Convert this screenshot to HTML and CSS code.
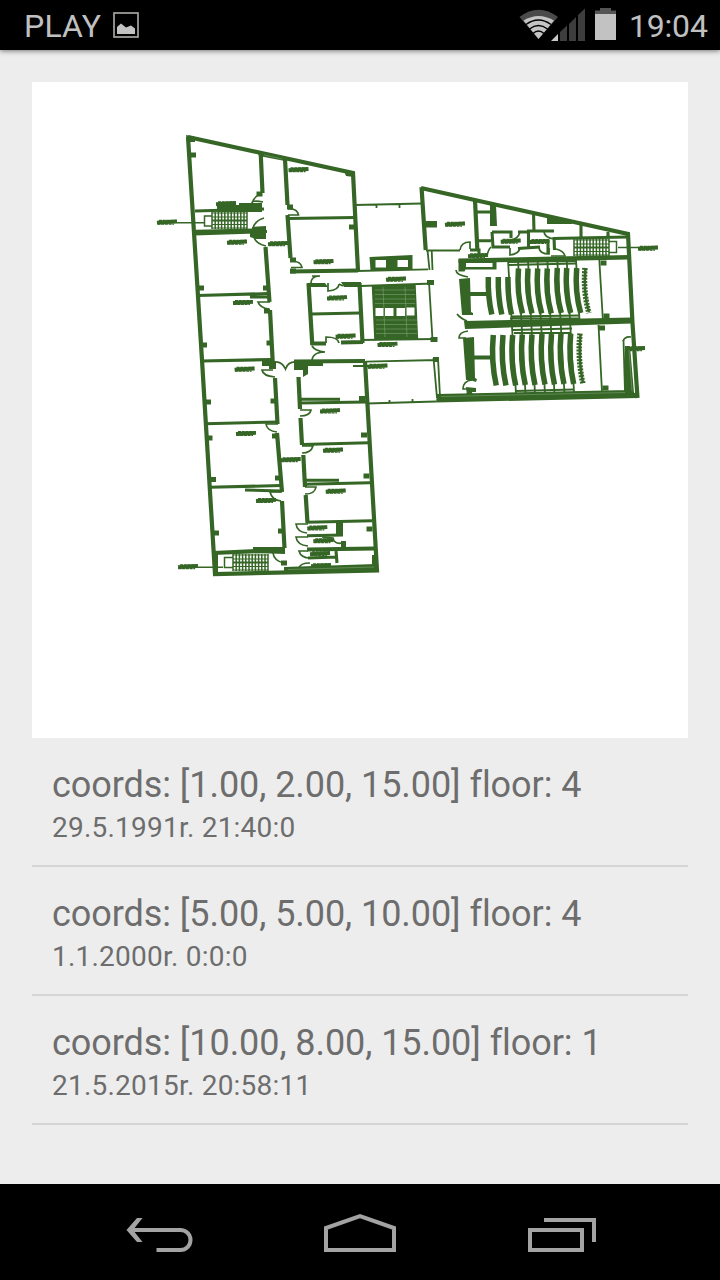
FILE: index.html
```html
<!DOCTYPE html>
<html lang="en">
<head>
<meta charset="utf-8">
<title>Floor map</title>
<link rel="stylesheet" href="styles.css">
</head>
<body>
<div class="screen">
  <header class="status">
    <span class="carrier">PLAY</span>
    <svg class="shot" width="26" height="26" viewBox="0 0 26 26"><rect x="1" y="1" width="24" height="24" fill="none" stroke="#a4a4a0" stroke-width="1.7"/><path d="M4 22v-7l4-3.500 5 4 5-2 4 3v5.500z" fill="#c2c2c2"/></svg>
    <svg class="signals" width="98" height="34" viewBox="519 8 98 34">
      <path d="M519.500 17Q538.500 2.500 558 17L538.500 39z" fill="#4a4a4a"/>
      <path d="M523.500 20.500Q538.500 11.500 554 20.500L538.500 39z" fill="#c4c4c4"/>
      <path d="M526 24.500Q538.500 15.500 551 24.500M529.500 29Q538.500 22 547.500 29M533 33.500Q538.500 28.500 544 33.500" fill="none" stroke="#000" stroke-width="1.500"/>
      <path d="M560 41V32L567 25.500V41zM569 41V24L576 17V41zM578 41V15L585 8.500V41z" fill="#3d3d3d"/>
      <path d="M551 41L558 34V41z" fill="#c8c8c8"/>
      <path d="M600 8h11v2.500h5V14H595V10.500h5z" fill="#555"/><path d="M595 14h21v26h-21z" fill="#c2c2c2"/>
    </svg>
    <span class="clock">19:04</span>
  </header>
  <main class="content">
    <svg class="plan" viewBox="32 82 656 656">
      <defs>
        <g id="tag"><path d="M-10 .7L10-.5" stroke-width="3.800"/><path d="M-8-1.600H9.500M-9.500 2.200H7" stroke-width="1.200" stroke-dasharray="3 .7"/></g>
        <path id="seatShort" d="M0 0Q-.5 20 3.500 37.500"/>
        <path id="seatLong" d="M0 0Q-2 24 4 45"/>
        <path id="seatTall" d="M0 0Q-2.500 26 3 50.500"/>
        <path id="post" d="M-3-2.500H3V2.500H-3z"/>
        <g id="stairs"><path d="M0 0V17M3.200 0V17M6.400 0V17M9.600 0V17M12.800 0V17M16 0V17M19.200 0V17M22.400 0V17M25.600 0V17M28.800 0V17M32 0V17M35 0V17" stroke-width="1.500"/><path d="M0 1H35M0 5H35M0 12.500H35M0 16H35" stroke-width="1.200"/><path d="M0 8.500H35" stroke-width="2.200"/></g>
      </defs>
      <g class="thick">
        <path d="M188 137L202 360L215 574L377 570.500L365 361M188 137L353 173L358 271"/>
        <path d="M260.700 153L262.500 193M285 159L287.500 205M287.500 215L290.500 258M290 271.500L358 270.500M265.500 247L269.500 302M270 310L272.700 362M275 378L277.500 424M277 433L282 492M282 501L284.500 548"/>
        <path d="M308.500 283L312.300 345M359.500 283L362.500 343M311 343.500H326M341 342.500L363 342M294 361.500L365 361M298.500 377L300 409M300.500 418L302 445M303.300 455L305 487M305.700 495L307.500 523"/>
        <path d="M421.500 187L425.700 250M421 188L628 234L632.500 323L637.500 398M475 200L477.300 249M213 553L285 550M307 549.500L374 548.500"/>
      </g>
      <g class="wall">
        <path d="M288 218.500L355 217.500M198 295.500L270 293.500M202 361L273 359.500M205 423.700L278 422M209.500 487.300L281 485.500M195 211L264 209M196 231.300L253 230M194 234L267 231.500M250 297H269M245 490L281 491"/>
        <path d="M311.500 314L359.500 313M300 399.300H340M300 403L367 402M302 444.500L369 442.700M305 480.300H339M305 484.300L370 482.700M307 522.300L372 520.700M307 535.700L343 535M308 558L337 557M336 551L337 563"/>
        <path d="M533.500 212L534 232M527 231H554M553 238.500L627 237M554 237L554.500 250M581 225V237M608 232V237M478 240.700H491M492 232H511V238M492 232L493 247H510M518 232H529M528.500 232V247M518 248.500L540 247M548 240V254M477 212H490M470 250H479V257"/>
      </g>
      <g class="thin">
        <path d="M355 205L422 203.500M376.500 205V208M399.500 204V208M426 250.500H460M357 271L428 269.300M427.500 250L429.500 270M431.700 250L432.500 270M361 286L433 283.500M361 340L435 339M429 282L432.500 340M366 361.700L438 360M367 403.500L436 401.500M389.500 400V403M412.500 399V402M433.500 358L437 398M438 358L440 397M353 366H370"/>
        <path d="M599.300 260L603 322M598.500 325L602 392M623.500 340L625 392M508.500 265L576 263.500M508.500 262L576 261M510 318.500H580M511 316.500L579 315.500M513 330L572 328.500M514 333H571M515.500 391L574 389.500"/>
        <path d="M508 260L516 394M518 260L525.500 394M528 260L535 394M537.500 260L545 394M547.300 260L554.500 394M557.300 260L564.500 394M566.700 260L574 392M576 260L579.500 320"/>
      </g>
      <g class="door">
        <path d="M263 202Q252 200 252 203M252 203Q255 195 262 194M264 218Q254 221 253 229M254 237Q256 244 266 246M288 209Q297 208 298.500 215H288M291 261Q301 261 302 267.500H291M311 285Q310 276 320 276H312M270 302H258Q260 308 269 309M273 370H262Q263 376 275 377M278 424H266Q267 431 277 432M282 492H270Q272 500 281 501"/>
        <path d="M274 362Q282 361 285.500 369Q288 361 297 362M312 346Q315 351 325 352Q313 352 312 360M328 283V291Q339 290 339 284M339 284L343 286M326 343V337Q338 337 339 343M300 410H311Q310 416 300 416M302 446H313Q311 453 302 453M305 487H316Q315 494 305 494"/>
        <path d="M308 524H296Q297 532 307 533M308 537H296Q297 545 308 546M308 551H299Q301 558 310 558M310 563Q300 563 299 568M273 553Q274 561 284 563M322 537L333 538L334 541Q338 545 344 542M460 250Q461 242 470 242V249M456 270Q456 275 468 277M457 314Q460 318 467 321M468 331Q459 332 459 338H466M472 380Q463 381 463 389H470"/>
        <path d="M491 247Q488 250 487 256M510 248V255Q519 254 520 248M520 232Q518 239 511 240M539 248Q540 254 549 254V248M544 232Q545 238 554 239M556 249Q564 251 565 256H551M623 341Q625 336 631 337"/>
      </g>
      <g class="solid">
        <path d="M186 135l9 2v5h-8zM217 205h22v-2h23v9h-45zM252 227l14-1v5h-14zM250 231l16 1v7h-10l-6-2zM257 151l28 6v4l-26-5zM344 171l10 1v5l-8-1zM262 361h14v8h-7v-3h-7zM294 361h29v5h-15v8l-5 3v-7h-9zM308 283h17l3 4h-20zM341 282h20v5h-17zM253 547h32v7l-32-1zM284 567l92-3v7l-92 2zM213 553h5v20h-5zM336 522h7v14h-7zM341 541h5v9h-5zM372 555h4v15h-4z"/>
        <path fill-rule="evenodd" d="M369.500 257l43-2v15h-42zM375.500 260v7.500h10.500V260zM397.500 260v7h10.500v-7z"/>
        <path fill-rule="evenodd" d="M371.700 285h44l2.500 54.500h-44zM375.500 308v8h8v-8zM385 308v8h8.500v-8zM396.500 308v8h8.500v-8zM406.500 307.500v8h8v-8z"/>
        <path d="M427 280h7v5h-7zM430.500 337h7v5h-7zM433 357h6v5h-6zM426 221h11v6.500h-11zM490 203l6 2 1 21h-7zM547 217l25 5v2h-25z"/>
        <path fill-rule="evenodd" d="M458.500 259.500l38-1.500v11.500h-31l-1 2h-6zM466 263v4h26.500v-4z"/>
        <path d="M459 279l11-1 1 34 2 1v2h-11zM463 338l11-1 1 41 2 1-1 3-6-2h-4zM466 387l10 1v4h-4l1 4h-6zM458.500 258.500L629 255v4.500l-170.500 3.500zM464 321l168-3.500v6L465 329zM437 394l193-4 8 5v3l-202 4.500zM625 346h5l4 47-9 1z"/>
        <use href="#post" x="193" y="155"/><use href="#post" x="201" y="288"/><use href="#post" x="204" y="345"/><use href="#post" x="208" y="402"/><use href="#post" x="209.500" y="438"/><use href="#post" x="213" y="479.500"/><use href="#post" x="216" y="533"/>
        <use href="#post" x="266" y="288"/><use href="#post" x="269.500" y="343"/><use href="#post" x="273.500" y="401"/><use href="#post" x="275" y="436"/><use href="#post" x="278" y="478"/><use href="#post" x="281" y="531"/><use href="#post" x="352" y="227"/><use href="#post" x="362" y="398.500"/><use href="#post" x="364" y="435"/><use href="#post" x="366.500" y="476"/><use href="#post" x="369.500" y="529"/>
        <use href="#post" x="603.500" y="263"/><use href="#post" x="606.500" y="316"/><use href="#post" x="602" y="328"/><use href="#post" x="605.500" y="388"/><use href="#post" x="259.500" y="194"/><use href="#post" x="290" y="207"/><use href="#post" x="293" y="260"/><use href="#post" x="293" y="271"/><use href="#post" x="267" y="311"/><use href="#post" x="284" y="563"/>
      </g>
      <g class="stroke">
        <use href="#tag" x="167" y="222"/><use href="#tag" x="226" y="203.500"/><use href="#tag" x="237" y="242"/><use href="#tag" x="278" y="243.500"/><use href="#tag" x="298.500" y="169.500"/><use href="#tag" x="323.500" y="261.500"/><use href="#tag" x="243" y="302.300"/><use href="#tag" x="244.600" y="369"/><use href="#tag" x="246" y="433.300"/><use href="#tag" x="266" y="500.300"/><use href="#tag" x="290.700" y="459.500"/><use href="#tag" x="188" y="566.500"/>
        <use href="#tag" x="337" y="297.700"/><use href="#tag" x="345.600" y="336"/><use href="#tag" x="330" y="410.700"/><use href="#tag" x="333" y="450"/><use href="#tag" x="335.700" y="491"/><use href="#tag" x="317.300" y="527.700"/><use href="#tag" x="323.300" y="540.500"/><use href="#tag" x="320" y="553.500"/><use href="#tag" x="321" y="565.500"/><use href="#tag" x="396" y="279"/><use href="#tag" x="387.500" y="344.200"/><use href="#tag" x="377.500" y="366"/><use href="#tag" x="455" y="224"/><use href="#tag" x="510.700" y="241"/><use href="#tag" x="539.500" y="241.300"/><use href="#tag" x="478" y="255.500"/><use href="#tag" x="648" y="248"/><use href="#tag" x="635" y="348.500"/>
        <use href="#stairs" x="212" y="212"/><use href="#stairs" x="233" y="554"/><use href="#stairs" x="574" y="239"/>
        <path d="M212 216H204.500V226H212M177 222.700H204M233 557.500H224.500V567.500H233M198 567.300H223M608.500 241.500H616.500V252.500H608.500M618 247.500H640" stroke-width="1.500"/>
        <path d="M470 294H487M473 357.500H490" stroke-width="4.200"/>
        <g class="seats">
          <use href="#seatShort" x="488.300" y="277"/><use href="#seatShort" x="498.300" y="277"/><use href="#seatShort" x="508" y="277"/>
          <use href="#seatLong" x="518.500" y="268.500"/><use href="#seatLong" x="528" y="268.500"/><use href="#seatLong" x="537.700" y="268.500"/><use href="#seatLong" x="547.300" y="268.500"/><use href="#seatLong" x="557.300" y="268"/><use href="#seatLong" x="566.700" y="268"/><use href="#seatLong" x="576.700" y="268"/>
          <use href="#seatTall" x="493.300" y="335"/><use href="#seatTall" x="503" y="335"/><use href="#seatTall" x="512.700" y="335"/><use href="#seatTall" x="522.300" y="334.500"/><use href="#seatTall" x="532" y="334.500"/><use href="#seatTall" x="542" y="334"/><use href="#seatTall" x="551.500" y="334"/><use href="#seatTall" x="561" y="333.500"/><use href="#seatTall" x="570.700" y="333.500"/>
        </g>
        <g class="edge-seats"><use href="#seatLong" x="585" y="268"/><use href="#seatTall" x="580" y="333.500"/></g>
        <path d="M585.500 268Q583 292 589 312M580.500 334Q578 360 583 383" stroke-width="2.500"/>
      </g>
      <g class="light"><path d="M375 290H415M375 294.500H415M375 299H415M375 303.500H415M376 320H417M376 324.500H417M376 329H417M376 333.500H417M383 287L385 337M405 287L407 337"/><path d="M441 396.500L625 392.500M288 569.500L374 567M264 155L282 159M629 350L632 391"/></g>
    </svg>
    <ul class="list">
      <li class="row"><span class="title">coords: [1.00, 2.00, 15.00] floor: 4</span><span class="date">29.5.1991r. 21:40:0</span></li>
      <li class="row"><span class="title">coords: [5.00, 5.00, 10.00] floor: 4</span><span class="date">1.1.2000r. 0:0:0</span></li>
      <li class="row"><span class="title">coords: [10.00, 8.00, 15.00] floor: 1</span><span class="date">21.5.2015r. 20:58:11</span></li>
    </ul>
  </main>
  <nav class="nav">
    <svg width="68" height="40" viewBox="126 1214 68 40"><path d="M131 1230H180.500A10 10 0 0 1 180.500 1250H156.500"/><path class="arrowhead" d="M137 1218H142.500L133 1230L142.500 1242H137L126.500 1230z"/></svg>
    <svg class="home" width="72" height="40" viewBox="324 1214 72 40"><path d="M326 1250V1228L360 1216.200L394 1228V1250z"/></svg>
    <svg width="68" height="40" viewBox="528 1214 68 40"><path d="M530 1230H582V1250H530zM544 1220H594V1242"/></svg>
  </nav>
</div>
</body>
</html>
```
FILE: styles.css
```css
body { margin: 0; }
.screen {
  display: flex; flex-direction: column;
  width: 720px; height: 1280px; overflow: hidden;
  background: #ededed; color: #6d6d6d;
  font-family: Roboto, sans-serif;
}
.status {
  display: flex; align-items: center; box-sizing: border-box;
  height: 50px; flex: none; padding: 0 12px 0 24px;
  background: #000; color: #c0c0c0;
  font-size: 32px; line-height: 50px;
  box-shadow: 0 1px 5px rgba(0, 0, 0, .5);
}
.carrier { width: 89px; padding-top: 2px; letter-spacing: .2px; }
.signals { margin-left: auto; }
.clock { width: 79px; margin-left: 12px; padding-top: 2px; white-space: nowrap; letter-spacing: -.2px; }
.content { flex: 1; padding: 32px 32px 0; }
.plan { display: block; width: 656px; height: 656px; background: #fff; fill: none; stroke: #356626; }
.thick { stroke-width: 4.2; }
.wall { stroke-width: 3.1; }
.thin { stroke-width: 1.8; }
.door { stroke-width: 1.7; }
.solid { fill: #356626; stroke: none; }
.seats { stroke-width: 5.5; }
.edge-seats { stroke-width: 5.5; stroke-dasharray: 2 1.2; }
.light { stroke: #8aab7e; stroke-width: .5; }
.list { margin: 0; padding: 0; list-style: none; }
.row {
  display: flex; flex-direction: column; box-sizing: border-box;
  height: 129px; padding: 26px 20px 0;
  border-bottom: 2px solid #d5d5d5; white-space: nowrap;
}
.title { font-size: 36px; line-height: 42px; letter-spacing: -.06px; }
.date { font-size: 28px; line-height: 33px; margin-top: 5px; letter-spacing: .22px; }
.nav {
  display: flex; justify-content: space-between; box-sizing: border-box;
  height: 96px; flex: none; padding: 30px 124px 0 126px; background: #000;
}
.nav svg { fill: none; stroke: #a3a3a3; stroke-width: 4; }
.nav .home { margin-right: 2px; }
.nav .arrowhead { fill: #a3a3a3; stroke: none; }
```
